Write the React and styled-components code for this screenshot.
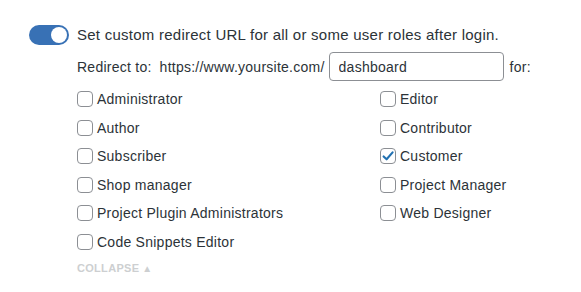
import React, { useState } from 'react'
import styled, { createGlobalStyle } from 'styled-components'

const GlobalStyle = createGlobalStyle`
    body {
        margin: 0;
        background: #ffffff;
        font-family: "Liberation Sans", Arial, sans-serif;
        color: #2c3338;
    }
`

const roles = [
    ['Administrator', 'Editor'],
    ['Author', 'Contributor'],
    ['Subscriber', 'Customer'],
    ['Shop manager', 'Project Manager'],
    ['Project Plugin Administrators', 'Web Designer'],
    ['Code Snippets Editor', null],
]

function App() {
    const [enabled, setEnabled] = useState(true)
    const [checked, setChecked] = useState({ Customer: true })

    const toggle = (name) => setChecked((c) => ({ ...c, [name]: !c[name] }))

    return (
        <Page>
            <GlobalStyle />
            <ToggleRow>
                <Switch $on={enabled} onClick={() => setEnabled(!enabled)}>
                    <Knob $on={enabled} />
                </Switch>
                <Label>Set custom redirect URL for all or some user roles after login.</Label>
            </ToggleRow>
            <Settings>
                <RedirectRow>
                    <span>Redirect to:</span>
                    <Site>https://www.yoursite.com/</Site>
                    <UrlInput defaultValue="dashboard" />
                    <span>for:</span>
                </RedirectRow>
                <RoleGrid>
                    {roles.flat().map((name, i) =>
                        name ? (
                            <Role key={name} onClick={() => toggle(name)}>
                                <Box $checked={!!checked[name]}>
                                    {checked[name] && (
                                        <svg width="14" height="14" viewBox="0 0 14 14">
                                            <path d="M2.6 7.4 L5.6 10.3 L11.6 3.4" fill="none" stroke="#2271b1" strokeWidth="2.1" strokeLinecap="round" strokeLinejoin="round" />
                                        </svg>
                                    )}
                                </Box>
                                <span>{name}</span>
                            </Role>
                        ) : (
                            <span key={'empty' + i} />
                        )
                    )}
                </RoleGrid>
                <Collapse>Collapse <Arrow>▲</Arrow></Collapse>
            </Settings>
        </Page>
    )
}

export default App

const Page = styled.div`
    padding: 25px 0 0 29px;
    font-size: 14px;
    letter-spacing: 0.25px;
`

const ToggleRow = styled.div`
    display: flex;
    align-items: center;
    gap: 8px;
    height: 20px;
`

const Switch = styled.div`
    width: 40px;
    height: 20px;
    border-radius: 10px;
    background: ${(p) => (p.$on ? '#3871b5' : '#c3c4c7')};
    display: flex;
    align-items: center;
    justify-content: ${(p) => (p.$on ? 'flex-end' : 'flex-start')};
    padding: 0 2px;
    box-sizing: border-box;
    cursor: pointer;
`

const Knob = styled.div`
    width: 16px;
    height: 16px;
    border-radius: 50%;
    background: #ffffff;
`

const Label = styled.span`
    line-height: 20px;
    font-size: 15px;
    letter-spacing: 0.25px;
`

const Settings = styled.div`
    padding-left: 48px;
`

const RedirectRow = styled.div`
    display: flex;
    align-items: center;
    margin-top: 7px;
    height: 29px;
    gap: 4px;
`

const Site = styled.span`
    margin-left: 4px;
`

const UrlInput = styled.input`
    width: 175px;
    height: 29px;
    box-sizing: border-box;
    border: 1px solid #8c8f94;
    border-radius: 4px;
    padding: 0 9px;
    font-family: inherit;
    font-size: 14px;
    letter-spacing: 0.25px;
    color: #2c3338;
    margin-right: 2px;
    outline: none;
`

const RoleGrid = styled.div`
    display: grid;
    grid-template-columns: 303px 200px;
    grid-auto-rows: 28.5px;
    margin-top: 4px;
`

const Role = styled.label`
    display: flex;
    align-items: center;
    gap: 4px;
    cursor: pointer;
`

const Box = styled.span`
    width: 16px;
    height: 16px;
    box-sizing: border-box;
    border: 1px solid #8c8f94;
    border-radius: 4px;
    display: flex;
    align-items: center;
    justify-content: center;
    background: #ffffff;
`

const Collapse = styled.div`
    margin-top: 6px;
    font-size: 11px;
    font-weight: 600;
    text-transform: uppercase;
    color: #cdcfd1;
    letter-spacing: 0.3px;
    display: flex;
    align-items: center;
    gap: 3px;
`

const Arrow = styled.span`
    font-size: 10px;
`
